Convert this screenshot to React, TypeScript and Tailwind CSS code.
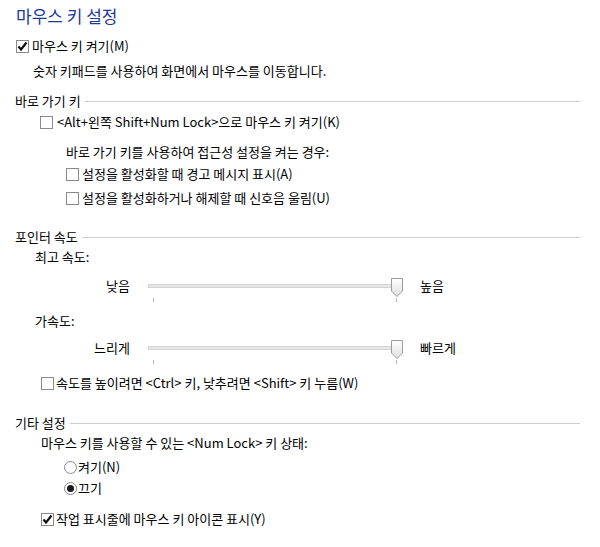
import React from "react"

const CheckBox = ({ checked }: { checked?: boolean }) => (
    <div className="w-[13px] h-[13px] shrink-0 border border-[#8a8a8a] bg-white flex items-center justify-center">
        {checked && (
            <svg width="11" height="11" viewBox="0 0 11 11">
                <path d="M1.5 5.5 L4 8.5 L9.5 1.5" fill="none" stroke="#111" strokeWidth="2.2" />
            </svg>
        )}
    </div>
)

const Radio = ({ checked }: { checked?: boolean }) => (
    <div className="w-[13px] h-[13px] shrink-0 rounded-full border border-[#8a8a8a] bg-white flex items-center justify-center">
        {checked && <div className="w-[7px] h-[7px] rounded-full bg-[#1a1a1a]" />}
    </div>
)

const Section = ({ title, className }: { title: string; className: string }) => (
    <div className={`flex items-center h-[20px] pl-[15px] pr-[20px] ${className}`}>
        <span>{title}</span>
        <div className="flex-1 h-px bg-[#cfcfcf] ml-[4px]" />
    </div>
)

const Slider = ({ low, high, className }: { low: string; high: string; className: string }) => (
    <div className={`flex items-start h-[26px] ${className}`}>
        <div className="w-[130px] h-[20px] flex items-center justify-end">{low}</div>
        <div className="relative w-[255px] h-[26px] ml-[18px]">
            <div className="absolute left-0 top-[8px] w-[250px] h-[4px] bg-[#e7e7e7] border border-[#d4d4d4]" />
            <div className="absolute left-[5px] top-[22px] w-px h-[4px] bg-[#b5b5b5]" />
            <div className="absolute left-[248px] top-[22px] w-px h-[4px] bg-[#b5b5b5]" />
            <svg className="absolute left-[243px] top-[2px]" width="12" height="19" viewBox="0 0 12 19">
                <defs>
                    <linearGradient id={`g-${low}`} x1="0" y1="0" x2="0" y2="1">
                        <stop offset="0" stopColor="#ffffff" />
                        <stop offset="1" stopColor="#dedede" />
                    </linearGradient>
                </defs>
                <path d="M0.5 0.5 H11.5 V13 L6 18.5 L0.5 13 Z" fill={`url(#g-${low})`} stroke="#9a9a9a" />
            </svg>
        </div>
        <div className="h-[20px] flex items-center ml-[17px]">{high}</div>
    </div>
)

const App = () => {
    return (
        <div className="w-[600px] h-[547px] bg-white text-black text-[13px] overflow-hidden font-['Noto_Sans_CJK_KR','Noto_Sans',sans-serif]">
            <div className="h-[32px] flex items-center pl-[16px] text-[17px] text-[#1e3a94]">마우스 키 설정</div>

            <div className="flex items-center h-[20px] mt-[4px] pl-[16px] gap-[3px]">
                <CheckBox checked />
                <span>마우스 키 켜기(M)</span>
            </div>
            <div className="flex items-center h-[20px] mt-[5px] pl-[33px]">숫자 키패드를 사용하여 화면에서 마우스를 이동합니다.</div>

            <Section title="바로 가기 키" className="mt-[10px]" />
            <div className="flex items-center h-[20px] mt-[1px] pl-[40px] gap-[4px]">
                <CheckBox />
                <span>&lt;Alt+왼쪽 Shift+Num Lock&gt;으로 마우스 키 켜기(K)</span>
            </div>
            <div className="flex items-center h-[20px] mt-[10px] pl-[66px]">바로 가기 키를 사용하여 접근성 설정을 켜는 경우:</div>
            <div className="flex items-center h-[20px] mt-[2px] pl-[66px] gap-[3px]">
                <CheckBox />
                <span>설정을 활성화할 때 경고 메시지 표시(A)</span>
            </div>
            <div className="flex items-center h-[20px] mt-[4px] pl-[66px] gap-[3px]">
                <CheckBox />
                <span>설정을 활성화하거나 해제할 때 신호음 울림(U)</span>
            </div>

            <Section title="포인터 속도" className="mt-[19px]" />
            <div className="flex items-center h-[20px] pl-[35px]">최고 속도:</div>
            <Slider low="낮음" high="높음" className="mt-[9px]" />
            <div className="flex items-center h-[20px] mt-[9px] pl-[35px]">가속도:</div>
            <Slider low="느리게" high="빠르게" className="mt-[7px]" />
            <div className="flex items-center h-[20px] mt-[9px] pl-[41px] gap-[2px]">
                <CheckBox />
                <span>속도를 높이려면 &lt;Ctrl&gt; 키, 낮추려면 &lt;Shift&gt; 키 누름(W)</span>
            </div>

            <Section title="기타 설정" className="mt-[20px]" />
            <div className="flex items-center h-[20px] pl-[41px]">마우스 키를 사용할 수 있는 &lt;Num Lock&gt; 키 상태:</div>
            <div className="flex items-center h-[20px] mt-[4px] pl-[64px] gap-[1px]">
                <Radio />
                <span>켜기(N)</span>
            </div>
            <div className="flex items-center h-[20px] mt-[1px] pl-[64px] gap-[1px]">
                <Radio checked />
                <span>끄기</span>
            </div>
            <div className="flex items-center h-[20px] mt-[11px] pl-[41px] gap-[2px]">
                <CheckBox checked />
                <span>작업 표시줄에 마우스 키 아이콘 표시(Y)</span>
            </div>
        </div>
    )
}

export default App
